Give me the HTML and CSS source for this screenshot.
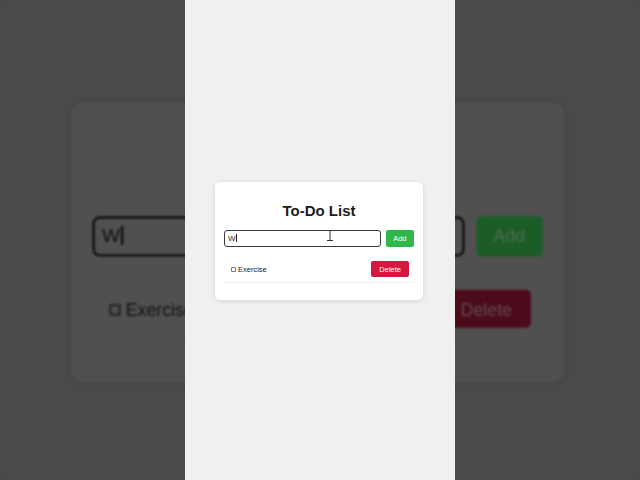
FILE: index.html
```html
<!DOCTYPE html>
<html lang="en">
<head>
<meta charset="utf-8">
<title>To-Do List</title>
<link rel="stylesheet" href="styles.css">
</head>
<body>
<div class="backdrop" aria-hidden="true">
  <div class="stage">
    <section class="card card--dim">
      <h2 class="title">To-Do List</h2>
      <div class="form-row">
        <div class="field">W<span class="caret"></span></div>
        <button class="btn btn-add">Add</button>
      </div>
      <ul class="list">
        <li class="item">
          <label class="item-label"><input type="checkbox" class="check">Exercise</label>
          <button class="btn btn-delete">Delete</button>
        </li>
      </ul>
    </section>
  </div>
</div>

<main class="phone">
  <section class="card">
    <h2 class="title">To-Do List</h2>
    <div class="form-row">
      <div class="field">W<span class="caret"></span></div>
      <button class="btn btn-add">Add</button>
    </div>
    <ul class="list">
      <li class="item">
        <label class="item-label"><input type="checkbox" class="check">Exercise</label>
        <button class="btn btn-delete">Delete</button>
      </li>
    </ul>
  </section>
</main>

<svg class="ibeam" width="8" height="12" viewBox="0 0 8 12" aria-hidden="true">
  <path d="M1.5 0.5h2l0.5 0.5l0.5-0.5h2 M4 1v9.5 M1 10.5h6" fill="none" stroke="#333" stroke-width="1"/>
</svg>
</body>
</html>
```

FILE: styles.css
```css
html, body {
  margin: 0;
  padding: 0;
}

body {
  width: 640px;
  height: 480px;
  overflow: hidden;
  position: relative;
  display: flex;
  justify-content: center;
  background: #4a4a4a;
  font-family: "Liberation Sans", Arial, sans-serif;
}

/* blurred, darkened zoomed copy behind the video column */
.backdrop {
  position: absolute;
  inset: 0;
  overflow: hidden;
  background: #4a4a4a;
  filter: blur(1px);
}

.stage {
  width: 270px;
  height: 480px;
  margin: 0 auto;
  box-sizing: border-box;
  padding: 2px 2px 0 0;
  display: flex;
  align-items: center;
  justify-content: center;
  transform: scale(2.37);
  transform-origin: 50% 50%;
}

.phone {
  position: relative;
  width: 270px;
  height: 480px;
  box-sizing: border-box;
  padding: 2px 2px 0 0;
  background: #f0f0f0;
  display: flex;
  align-items: center;
  justify-content: center;
}

.card {
  width: 208px;
  box-sizing: border-box;
  padding: 20px 9px 17px;
  background: #ffffff;
  border-radius: 5px;
  box-shadow: 0 1px 5px rgba(0, 0, 0, 0.12);
}

.title {
  margin: 0;
  font-size: 15px;
  line-height: 17px;
  font-weight: bold;
  text-align: center;
  color: #1c1c1c;
}

.form-row {
  margin-top: 11px;
  display: flex;
  gap: 5px;
}

.field {
  flex: 1;
  height: 17px;
  box-sizing: border-box;
  border: 1px solid #3a3a3a;
  border-radius: 3px;
  padding: 0 3px;
  font-size: 8px;
  line-height: 15px;
  color: #222;
  background: #fff;
}

.caret {
  display: inline-block;
  width: 1px;
  height: 8px;
  margin-left: 0.5px;
  vertical-align: -1px;
  background: #222;
}

.btn {
  border: none;
  margin: 0;
  padding: 0 7.5px;
  font-family: inherit;
  font-size: 7.5px;
  color: #ffffff;
  border-radius: 2px;
}

.btn-add {
  height: 17px;
  background: #2eb84b;
}

.btn-delete {
  height: 16px;
  padding: 0 8px;
  background: #d3193f;
}

.list {
  list-style: none;
  margin: 9px 0 0;
  padding: 0;
}

.item {
  height: 26px;
  padding: 0 5px 0 7px;
  display: flex;
  align-items: center;
  justify-content: space-between;
  border-bottom: 1px solid #eeeeee;
}

.item-label {
  display: flex;
  align-items: center;
  font-size: 7.5px;
  color: #222;
}

.check {
  appearance: none;
  -webkit-appearance: none;
  width: 5px;
  height: 5px;
  margin: 0 2px 0 0;
  border: 0.7px solid #777;
  border-radius: 1px;
  background: #fff;
}

/* dimmed copy in the backdrop */
.card--dim {
  background: #505050;
  box-shadow: 0 0 3px rgba(0, 0, 0, 0.08);
}

.card--dim .title {
  color: #101010;
}

.card--dim .field {
  background: #505050;
  border-color: #0e0e0e;
  color: #0e0e0e;
}

.card--dim .caret {
  background: #0e0e0e;
}

.card--dim .btn-add {
  background: #1b5c27;
  color: #4e6e54;
}

.card--dim .btn-delete {
  background: #4c0b1b;
  color: #5e4c51;
}

.card--dim .item {
  border-bottom-color: #4d4d4d;
}

.card--dim .item-label {
  color: #101010;
}

.card--dim .check {
  background: #505050;
  border-color: #262626;
}

.ibeam {
  position: absolute;
  left: 326px;
  top: 230px;
}
```
